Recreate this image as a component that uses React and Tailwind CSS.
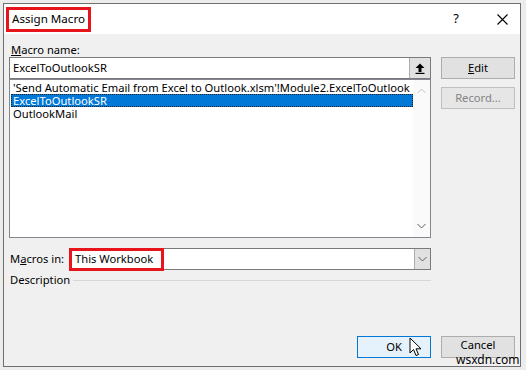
import { useState } from 'react';

const items = [
  "'Send Automatic Email from Excel to Outlook.xlsm'!Module2.ExcelToOutlook",
  'ExcelToOutlookSR',
  'OutlookMail',
];

const font = { fontFamily: '"Noto Sans", "Liberation Sans", sans-serif' };

// the little gray chevron used by the scroll bar and the combo box
const Chevron = ({ up }) => (
  <svg width="9" height="6" viewBox="0 0 9 6" className="block">
    <path
      d={up ? 'M0.5 5 L4.5 1 L8.5 5' : 'M0.5 1 L4.5 5 L8.5 1'}
      fill="none"
      stroke={up ? '#c2c2c2' : '#606060'}
      strokeWidth="1"
    />
  </svg>
);

const WinButton = ({ children, disabled, primary, className = '' }) => (
  <div
    className={`h-[22px] w-[74px] flex items-center justify-center border text-[11.2px] ${
      primary ? 'border-[#0078d7] bg-[#e5f1fb]' : 'border-[#adadad] bg-[#e1e1e1]'
    } ${disabled ? 'text-[#838383] !border-[#bfbfbf] !bg-[#e6e6e6]' : 'text-black'} ${className}`}
  >
    {children}
  </div>
);

const App = () => {
  const [selected, setSelected] = useState(1);

  return (
    <div className="w-[526px] h-[370px] bg-[#ececec] pl-[3px] pt-[3px]" style={font}>
      <div className="relative w-[518px] h-[364px] border border-[#6f6f6f] bg-[#f0f0f0] flex flex-col">
        {/* title bar */}
        <div className="h-[30px] bg-white flex items-center pl-[2px] pr-[12px]">
          <div className="h-[25px] w-[85px] border-[3px] border-[#e8141c] flex items-center pl-[3px] text-[11.6px] text-black leading-none whitespace-nowrap">
            Assign Macro
          </div>
          <div className="flex-1" />
          <span className="text-[13px] text-black mr-[38px]">?</span>
          <svg width="11" height="11" viewBox="0 0 11 11">
            <path d="M0.5 0.5 L10.5 10.5 M10.5 0.5 L0.5 10.5" stroke="#000" strokeWidth="1.1" />
          </svg>
        </div>

        {/* body */}
        <div className="flex-1 flex pl-[5px] pr-[5px] pt-[8px] text-[11.2px] text-black">
          <div className="w-[422px] flex flex-col">
            <div className="h-[15px] leading-[15px] pl-[2px]">
              <span className="underline">M</span>acro name:
            </div>
            <div className="h-[22px] border border-[#7a7a7a] bg-white flex items-center">
              <span className="flex-1 pl-[3px]">ExcelToOutlookSR</span>
              <div className="w-[21px] h-[20px] bg-[#e1e1e1] border-l border-[#adadad] flex items-center justify-center">
                <svg width="10" height="11" viewBox="0 0 10 11">
                  <path d="M5 0.5 L9.5 5 L6.5 5 L6.5 9 L3.5 9 L3.5 5 L0.5 5 Z" fill="#000" />
                  <rect x="0.5" y="9.8" width="9" height="1.2" fill="#000" />
                </svg>
              </div>
            </div>
            <div className="h-[159px] border border-[#828790] bg-white flex">
              <div className="flex-1 flex flex-col pt-[1px] pl-[1px]">
                {items.map((it, i) => (
                  <div
                    key={it}
                    onClick={() => setSelected(i)}
                    className={`h-[13px] leading-[13px] pl-[2px] whitespace-nowrap ${
                      selected === i
                        ? 'bg-[#0078d7] text-white outline outline-1 outline-dotted outline-[#222] -outline-offset-1'
                        : ''
                    }`}
                  >
                    {it}
                  </div>
                ))}
              </div>
              <div className="w-[17px] bg-[#fafafa] flex flex-col items-center justify-between py-[8px]">
                <Chevron up />
                <Chevron up={false} />
              </div>
            </div>

            <div className="mt-[10px] h-[22px] flex items-center">
              <div className="w-[61px] pl-[1px]">
                M<span className="underline">a</span>cros in:
              </div>
              <div className="flex-1 h-[22px] border border-[#7a7a7a] bg-white flex items-center">
                <div className="h-[23px] -ml-[2px] border-[3px] border-[#e8141c] flex items-center pl-[3px] w-[95px] whitespace-nowrap">
                  This Workbook
                </div>
                <div className="flex-1" />
                <div className="w-[16px] h-[20px] bg-[#e1e1e1] border-l border-[#adadad] flex items-center justify-center">
                  <Chevron up={false} />
                </div>
              </div>
            </div>

            <div className="mt-[2px] h-[16px] flex items-center">
              <span className="pl-[1px]">Description</span>
              <div className="flex-1 ml-[3px] h-px bg-[#d6d6d6]" />
            </div>

            <div className="flex-1" />
            <div className="flex justify-end pb-[8px]">
              <WinButton primary>OK</WinButton>
            </div>
          </div>

          <div className="ml-[10px] w-[74px] flex flex-col pt-[15px]">
            <WinButton>
              <span className="underline">E</span>dit
            </WinButton>
            <WinButton disabled className="mt-[8px]">Record...</WinButton>
            <div className="flex-1" />
            <WinButton className="mb-[8px] pb-[3px]">Cancel</WinButton>
          </div>
        </div>

        {/* mouse pointer over OK */}
        <svg className="absolute left-[405px] top-[333px]" width="13" height="21" viewBox="0 0 13 21">
          <path
            d="M1 1 L1 16 L4.5 12.5 L7 18.5 L9.5 17.5 L7 11.8 L12 11.8 Z"
            fill="#fff"
            stroke="#000"
            strokeWidth="1"
            strokeLinejoin="round"
          />
        </svg>

        {/* watermark */}
        <div className="absolute left-[452px] top-[350px] text-[12px] leading-[12px] text-black">
          wsxdn.com
        </div>
      </div>
    </div>
  );
};

export default App;
